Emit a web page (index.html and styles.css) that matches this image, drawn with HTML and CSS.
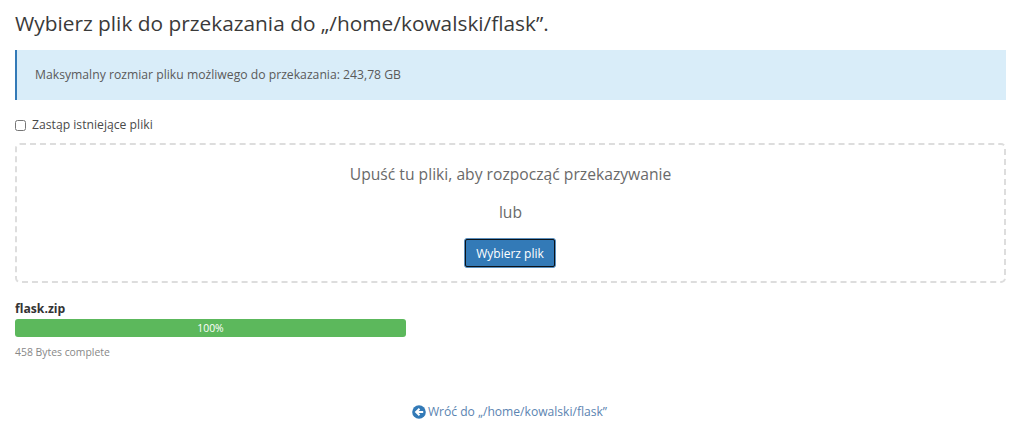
FILE: index.html
```html
<!DOCTYPE html>
<html lang="pl">
<head>
<meta charset="utf-8">
<title>Przekazywanie plików</title>
<link rel="stylesheet" href="styles.css">
</head>
<body>
<main class="page">
  <h1 class="title">Wybierz plik do przekazania do „/home/kowalski/flask”.</h1>
  <div class="alert">Maksymalny rozmiar pliku możliwego do przekazania: 243,78 GB</div>
  <label class="overwrite"><input class="check" type="checkbox"><span>Zastąp istniejące pliki</span></label>
  <section class="dropzone">
    <p class="drop-text">Upuść tu pliki, aby rozpocząć przekazywanie</p>
    <p class="drop-text or">lub</p>
    <button class="btn" type="button">Wybierz plik</button>
  </section>
  <section class="upload">
    <div class="file-name">flask.zip</div>
    <div class="progress">100%</div>
    <div class="status">458 Bytes complete</div>
  </section>
  <p class="back">
    <a class="back-link" href="#">
      <svg class="back-icon" viewBox="0 0 14 14" aria-hidden="true"><circle cx="7" cy="7" r="6.8" fill="#337ab7"/><path d="M2.7 7 6.8 3.1 8.2 4.5 6.6 6H11.2V8H6.6L8.2 9.5 6.8 10.9Z" fill="#fff"/></svg>Wróć do „/home/kowalski/flask”
    </a>
  </p>
</main>
</body>
</html>
```
FILE: styles.css
```css
* { box-sizing: border-box; }
html, body { margin: 0; background: #fff; }
body { font-family: "Open Sans", "Liberation Sans", sans-serif; color: #333; font-size: 12px; }
.page { padding: 0 18px 0 15px; height: 441px; overflow: hidden; }
.title { margin: 0; padding-top: 9px; height: 50px; font-size: 20.85px; line-height: 28px; font-weight: 400; color: #3a3a3a; }
.alert { height: 50px; display: flex; align-items: center; padding-left: 18px; padding-bottom: 1px; border-left: 2px solid #337ab7; background: #d9edf9; color: #5a5a5a; font-size: 12.2px; }
.overwrite { display: flex; align-items: center; height: 20px; margin-top: 14px; font-size: 12.2px; color: #4a4a4a; }
.check { margin: 3px 6px 0 0; width: 11px; height: 11px; }
.dropzone { margin-top: 9px; height: 140px; border: 2px dashed #ddd; border-radius: 5px; display: flex; flex-direction: column; align-items: center; padding-top: 18px; color: #666; }
.drop-text { margin: 0; font-size: 15.66px; line-height: 22px; color: #6a6a6a; }
.or { margin-top: 16px; }
.btn { margin-top: 15px; margin-left: -1px; width: 92px; height: 30px; padding: 0; background: #337ab7; color: #fff; font: 12px "Open Sans", sans-serif; border: 1px solid #5b8fbd; border-radius: 3px; outline: 1px solid #0b1218; outline-offset: -2px; }
.upload { margin-top: 17px; }
.file-name { font-weight: 700; font-size: 12.2px; line-height: 17px; color: #333; }
.progress { margin-top: 2px; width: 391px; height: 18px; border-radius: 3px; background: #5cb85c; color: #fff; font-size: 10.4px; line-height: 18px; text-align: center; }
.status { margin-top: 8px; font-size: 10.4px; line-height: 14px; color: #888; }
.back { margin: 44px 0 0; text-align: center; font-size: 12.1px; line-height: 17px; }
.back-link { color: #5b84b1; text-decoration: none; display: inline-flex; align-items: center; margin-left: -2px; }
.back-icon { width: 14px; height: 14px; margin-right: 2px; }
```
